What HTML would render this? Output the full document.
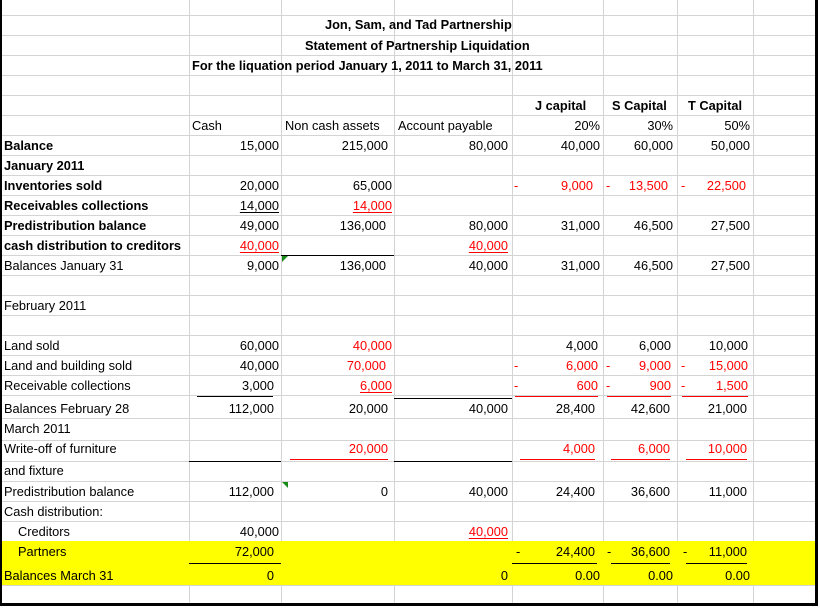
<!DOCTYPE html>
<html><head><meta charset="utf-8"><style>
body{margin:0;width:820px;height:608px;background:#fff;position:relative;overflow:hidden;font-family:"Liberation Sans",Arial,sans-serif;font-size:12.8px;color:#000}
.v{position:absolute;top:0;height:603px;width:1px;background:#d4d4d4}
.h{position:absolute;left:2px;width:813px;height:1px;background:#d4d4d4}
.t{position:absolute;white-space:nowrap;line-height:16px;height:16px}
.r{text-align:right}
.b{font-weight:bold}
.red{color:#f00}
.u{text-decoration:underline;text-underline-offset:2px}
.ln{position:absolute;height:1px;background:#000}
.rl{position:absolute;height:1px;background:#f00}
</style></head><body>
<div class="h" style="top:15px"></div><div class="h" style="top:35px"></div><div class="h" style="top:55px"></div><div class="h" style="top:75px"></div><div class="h" style="top:95px"></div><div class="h" style="top:115px"></div><div class="h" style="top:135px"></div><div class="h" style="top:155px"></div><div class="h" style="top:175px"></div><div class="h" style="top:195px"></div><div class="h" style="top:215px"></div><div class="h" style="top:235px"></div><div class="h" style="top:255px"></div><div class="h" style="top:275px"></div><div class="h" style="top:295px"></div><div class="h" style="top:315px"></div><div class="h" style="top:335px"></div><div class="h" style="top:355px"></div><div class="h" style="top:375px"></div><div class="h" style="top:395px"></div><div class="h" style="top:418px"></div><div class="h" style="top:440px"></div><div class="h" style="top:461px"></div><div class="h" style="top:481px"></div><div class="h" style="top:501px"></div><div class="h" style="top:521px"></div><div class="h" style="top:541px"></div><div class="h" style="top:585px"></div>
<div class="v" style="left:189px"></div><div class="v" style="left:281px"></div><div class="v" style="left:394px"></div><div class="v" style="left:512px"></div><div class="v" style="left:603px"></div><div class="v" style="left:677px"></div><div class="v" style="left:753px"></div>
<div style="position:absolute;left:2px;top:541px;width:813px;height:44px;background:#ffff00"></div>
<div style="position:absolute;left:0;top:0;width:2px;height:606px;background:#000"></div>
<div style="position:absolute;left:815px;top:0;width:3px;height:606px;background:#000"></div>
<div style="position:absolute;left:0;top:603px;width:818px;height:3px;background:#000"></div>

<div class="t b" style="left:325px;top:17px">Jon, Sam, and Tad Partnership</div>
<div class="t b" style="left:305px;top:38px">Statement of Partnership Liquidation</div>
<div class="t b" style="left:192px;top:58px">For the liquation period January 1, 2011 to March 31, 2011</div>
<div class="t b" style="left:535px;top:98px">J capital</div>
<div class="t b" style="left:612px;top:98px">S Capital</div>
<div class="t b" style="left:688px;top:98px">T Capital</div>
<div class="t" style="left:192px;top:118px">Cash</div>
<div class="t" style="left:285px;top:118px">Non cash assets</div>
<div class="t" style="left:398px;top:118px">Account payable</div>
<div class="t r" style="right:220px;top:118px">20%</div>
<div class="t r" style="right:147px;top:118px">30%</div>
<div class="t r" style="right:70px;top:118px">50%</div>

<div class="t b" style="left:4px;top:138px">Balance</div>
<div class="t b" style="left:4px;top:158px">January 2011</div>
<div class="t b" style="left:4px;top:178px">Inventories sold</div>
<div class="t b" style="left:4px;top:198px">Receivables collections</div>
<div class="t b" style="left:4px;top:218px">Predistribution balance</div>
<div class="t b" style="left:4px;top:238px">cash distribution to creditors</div>
<div class="t" style="left:4px;top:258px">Balances January 31</div>
<div class="t" style="left:4px;top:298px">February 2011</div>
<div class="t" style="left:4px;top:338px">Land sold</div>
<div class="t" style="left:4px;top:358px">Land and building sold</div>
<div class="t" style="left:4px;top:378px">Receivable collections</div>
<div class="t" style="left:4px;top:401px">Balances February 28</div>
<div class="t" style="left:4px;top:421px">March 2011</div>
<div class="t" style="left:4px;top:441px">Write-off of furniture</div>
<div class="t" style="left:4px;top:463px">and fixture</div>
<div class="t" style="left:4px;top:484px">Predistribution balance</div>
<div class="t" style="left:4px;top:504px">Cash distribution:</div>
<div class="t" style="left:18px;top:524px">Creditors</div>
<div class="t" style="left:18px;top:544px">Partners</div>
<div class="t" style="left:4px;top:568px">Balances March 31</div>

<div class="t r" style="right:541px;top:138px">15,000</div>
<div class="t r" style="right:432px;top:138px">215,000</div>
<div class="t r" style="right:312px;top:138px">80,000</div>
<div class="t r" style="right:220px;top:138px">40,000</div>
<div class="t r" style="right:147px;top:138px">60,000</div>
<div class="t r" style="right:70px;top:138px">50,000</div>
<div class="t r" style="right:541px;top:178px">20,000</div>
<div class="t r" style="right:428px;top:178px">65,000</div>
<div class="t red" style="left:514px;top:178px">-</div>
<div class="t r red" style="right:227px;top:178px">9,000</div>
<div class="t red" style="left:606px;top:178px">-</div>
<div class="t r red" style="right:152px;top:178px">13,500</div>
<div class="t red" style="left:681px;top:178px">-</div>
<div class="t r red" style="right:74px;top:178px">22,500</div>
<div class="t r u" style="right:541px;top:198px">14,000</div>
<div class="t r u red" style="right:428px;top:198px">14,000</div>
<div class="t r" style="right:541px;top:218px">49,000</div>
<div class="t r" style="right:434px;top:218px">136,000</div>
<div class="t r" style="right:312px;top:218px">80,000</div>
<div class="t r" style="right:220px;top:218px">31,000</div>
<div class="t r" style="right:147px;top:218px">46,500</div>
<div class="t r" style="right:70px;top:218px">27,500</div>
<div class="t r u red" style="right:541px;top:238px">40,000</div>
<div class="t r u red" style="right:312px;top:238px">40,000</div>
<div class="ln" style="left:281px;top:255px;width:113px"></div>
<div style="position:absolute;left:282px;top:256px;width:0;height:0;border-top:6px solid #1a8a1a;border-right:6px solid transparent"></div>
<div class="t r" style="right:541px;top:258px">9,000</div>
<div class="t r" style="right:434px;top:258px">136,000</div>
<div class="t r" style="right:312px;top:258px">40,000</div>
<div class="t r" style="right:220px;top:258px">31,000</div>
<div class="t r" style="right:147px;top:258px">46,500</div>
<div class="t r" style="right:70px;top:258px">27,500</div>
<div class="t r" style="right:541px;top:338px">60,000</div>
<div class="t r red" style="right:428px;top:338px">40,000</div>
<div class="t r" style="right:222px;top:338px">4,000</div>
<div class="t r" style="right:149px;top:338px">6,000</div>
<div class="t r" style="right:72px;top:338px">10,000</div>
<div class="t r" style="right:541px;top:358px">40,000</div>
<div class="t r red" style="right:434px;top:358px">70,000</div>
<div class="t red" style="left:514px;top:358px">-</div>
<div class="t r red" style="right:222px;top:358px">6,000</div>
<div class="t red" style="left:606px;top:358px">-</div>
<div class="t r red" style="right:149px;top:358px">9,000</div>
<div class="t red" style="left:681px;top:358px">-</div>
<div class="t r red" style="right:72px;top:358px">15,000</div>
<div class="t r" style="right:546px;top:378px">3,000</div>
<div class="ln" style="left:197px;top:396px;width:76px"></div>
<div class="t r u red" style="right:428px;top:378px">6,000</div>
<div class="ln" style="left:394px;top:398px;width:118px"></div>
<div class="t red" style="left:514px;top:378px">-</div>
<div class="t r red" style="right:222px;top:378px">600</div>
<div class="rl" style="left:515px;top:396px;width:83px"></div>
<div class="t red" style="left:606px;top:378px">-</div>
<div class="t r red" style="right:149px;top:378px">900</div>
<div class="rl" style="left:607px;top:396px;width:64px"></div>
<div class="t red" style="left:681px;top:378px">-</div>
<div class="t r red" style="right:72px;top:378px">1,500</div>
<div class="rl" style="left:682px;top:396px;width:66px"></div>
<div class="t r" style="right:546px;top:401px">112,000</div>
<div class="t r" style="right:432px;top:401px">20,000</div>
<div class="t r" style="right:312px;top:401px">40,000</div>
<div class="t r" style="right:225px;top:401px">28,400</div>
<div class="t r" style="right:150px;top:401px">42,600</div>
<div class="t r" style="right:73px;top:401px">21,000</div>
<div class="t r red" style="right:432px;top:441px">20,000</div>
<div class="rl" style="left:290px;top:459px;width:98px"></div>
<div class="t r red" style="right:225px;top:441px">4,000</div>
<div class="rl" style="left:520px;top:459px;width:75px"></div>
<div class="t r red" style="right:150px;top:441px">6,000</div>
<div class="rl" style="left:611px;top:459px;width:59px"></div>
<div class="t r red" style="right:73px;top:441px">10,000</div>
<div class="rl" style="left:686px;top:459px;width:61px"></div>
<div class="ln" style="left:189px;top:461px;width:92px"></div>
<div class="ln" style="left:394px;top:461px;width:118px"></div>
<div class="t r" style="right:546px;top:484px">112,000</div>
<div style="position:absolute;left:282px;top:482px;width:0;height:0;border-bottom:6px solid #1a8a1a;border-left:6px solid transparent;transform:scaleY(-1)"></div>
<div class="t r" style="right:432px;top:484px">0</div>
<div class="t r" style="right:312px;top:484px">40,000</div>
<div class="t r" style="right:225px;top:484px">24,400</div>
<div class="t r" style="right:150px;top:484px">36,600</div>
<div class="t r" style="right:73px;top:484px">11,000</div>
<div class="t r" style="right:541px;top:524px">40,000</div>
<div class="t r u red" style="right:312px;top:524px">40,000</div>
<div class="t r" style="right:546px;top:544px">72,000</div>
<div class="ln" style="left:189px;top:563px;width:92px"></div>
<div class="t" style="left:516px;top:544px">-</div>
<div class="t r" style="right:225px;top:544px">24,400</div>
<div class="ln" style="left:512px;top:563px;width:85px"></div>
<div class="t" style="left:607px;top:544px">-</div>
<div class="t r" style="right:150px;top:544px">36,600</div>
<div class="ln" style="left:611px;top:563px;width:59px"></div>
<div class="t" style="left:683px;top:544px">-</div>
<div class="t r" style="right:73px;top:544px">11,000</div>
<div class="ln" style="left:686px;top:563px;width:61px"></div>
<div class="t r" style="right:546px;top:568px">0</div>
<div class="t r" style="right:312px;top:568px">0</div>
<div class="t r" style="right:220px;top:568px">0.00</div>
<div class="t r" style="right:147px;top:568px">0.00</div>
<div class="t r" style="right:70px;top:568px">0.00</div>
</body></html>
